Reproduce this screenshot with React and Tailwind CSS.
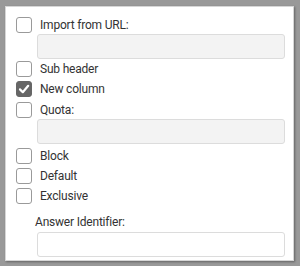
import React from "react";

function Box({ checked }) {
  if (checked) {
    return (
      <span className="w-4 h-4 rounded-[3px] bg-[#666666] border border-[#666666] flex items-center justify-center shrink-0">
        <svg width="12" height="12" viewBox="0 0 12 12" fill="none">
          <path d="M2 6.4 L4.8 9.2 L10.2 2.8" stroke="white" strokeWidth="2.2" strokeLinecap="round" strokeLinejoin="round" />
        </svg>
      </span>
    );
  }
  return <span className="w-4 h-4 rounded-[3px] bg-white border border-[#9a9a9a] shrink-0" />;
}

function Row({ label, checked, className = "" }) {
  return (
    <div className={`flex items-center h-4 ${className}`}>
      <Box checked={checked} />
      <span className="ml-[8px] text-[12px] tracking-[-0.2px] leading-4 text-[#333333]">{label}</span>
    </div>
  );
}

function Field({ filled, className = "" }) {
  return (
    <div
      className={`ml-[21px] w-[248px] h-[25px] rounded-[3px] border border-[#dcdcdc] ${
        filled ? "bg-[#f3f3f3]" : "bg-white"
      } ${className}`}
    />
  );
}

export default function App() {
  return (
    <div className="w-[300px] h-[266px] bg-[#999999] pt-[6px] pl-[5px]" style={{ fontFamily: "Roboto, 'Liberation Sans', sans-serif" }}>
      <div className="w-[289px] h-[255px] bg-white border border-[#d6d6d6] shadow-[1px_1px_2px_rgba(0,0,0,0.35)] pt-[10px] pl-[10px]">
        <Row label="Import from URL:" />
        <Field filled className="mt-[1px]" />
        <Row label="Sub header" className="mt-[2px]" />
        <Row label="New column" checked className="mt-[4px]" />
        <Row label="Quota:" className="mt-[5px]" />
        <Field filled className="mt-[1px]" />
        <Row label="Block" className="mt-[4px]" />
        <Row label="Default" className="mt-[4px]" />
        <Row label="Exclusive" className="mt-[4px]" />
        <div className="ml-[19px] mt-[10px] text-[12px] tracking-[-0.2px] leading-4 text-[#333333]">Answer Identifier:</div>
        <Field className="mt-[2px]" />
      </div>
    </div>
  );
}
